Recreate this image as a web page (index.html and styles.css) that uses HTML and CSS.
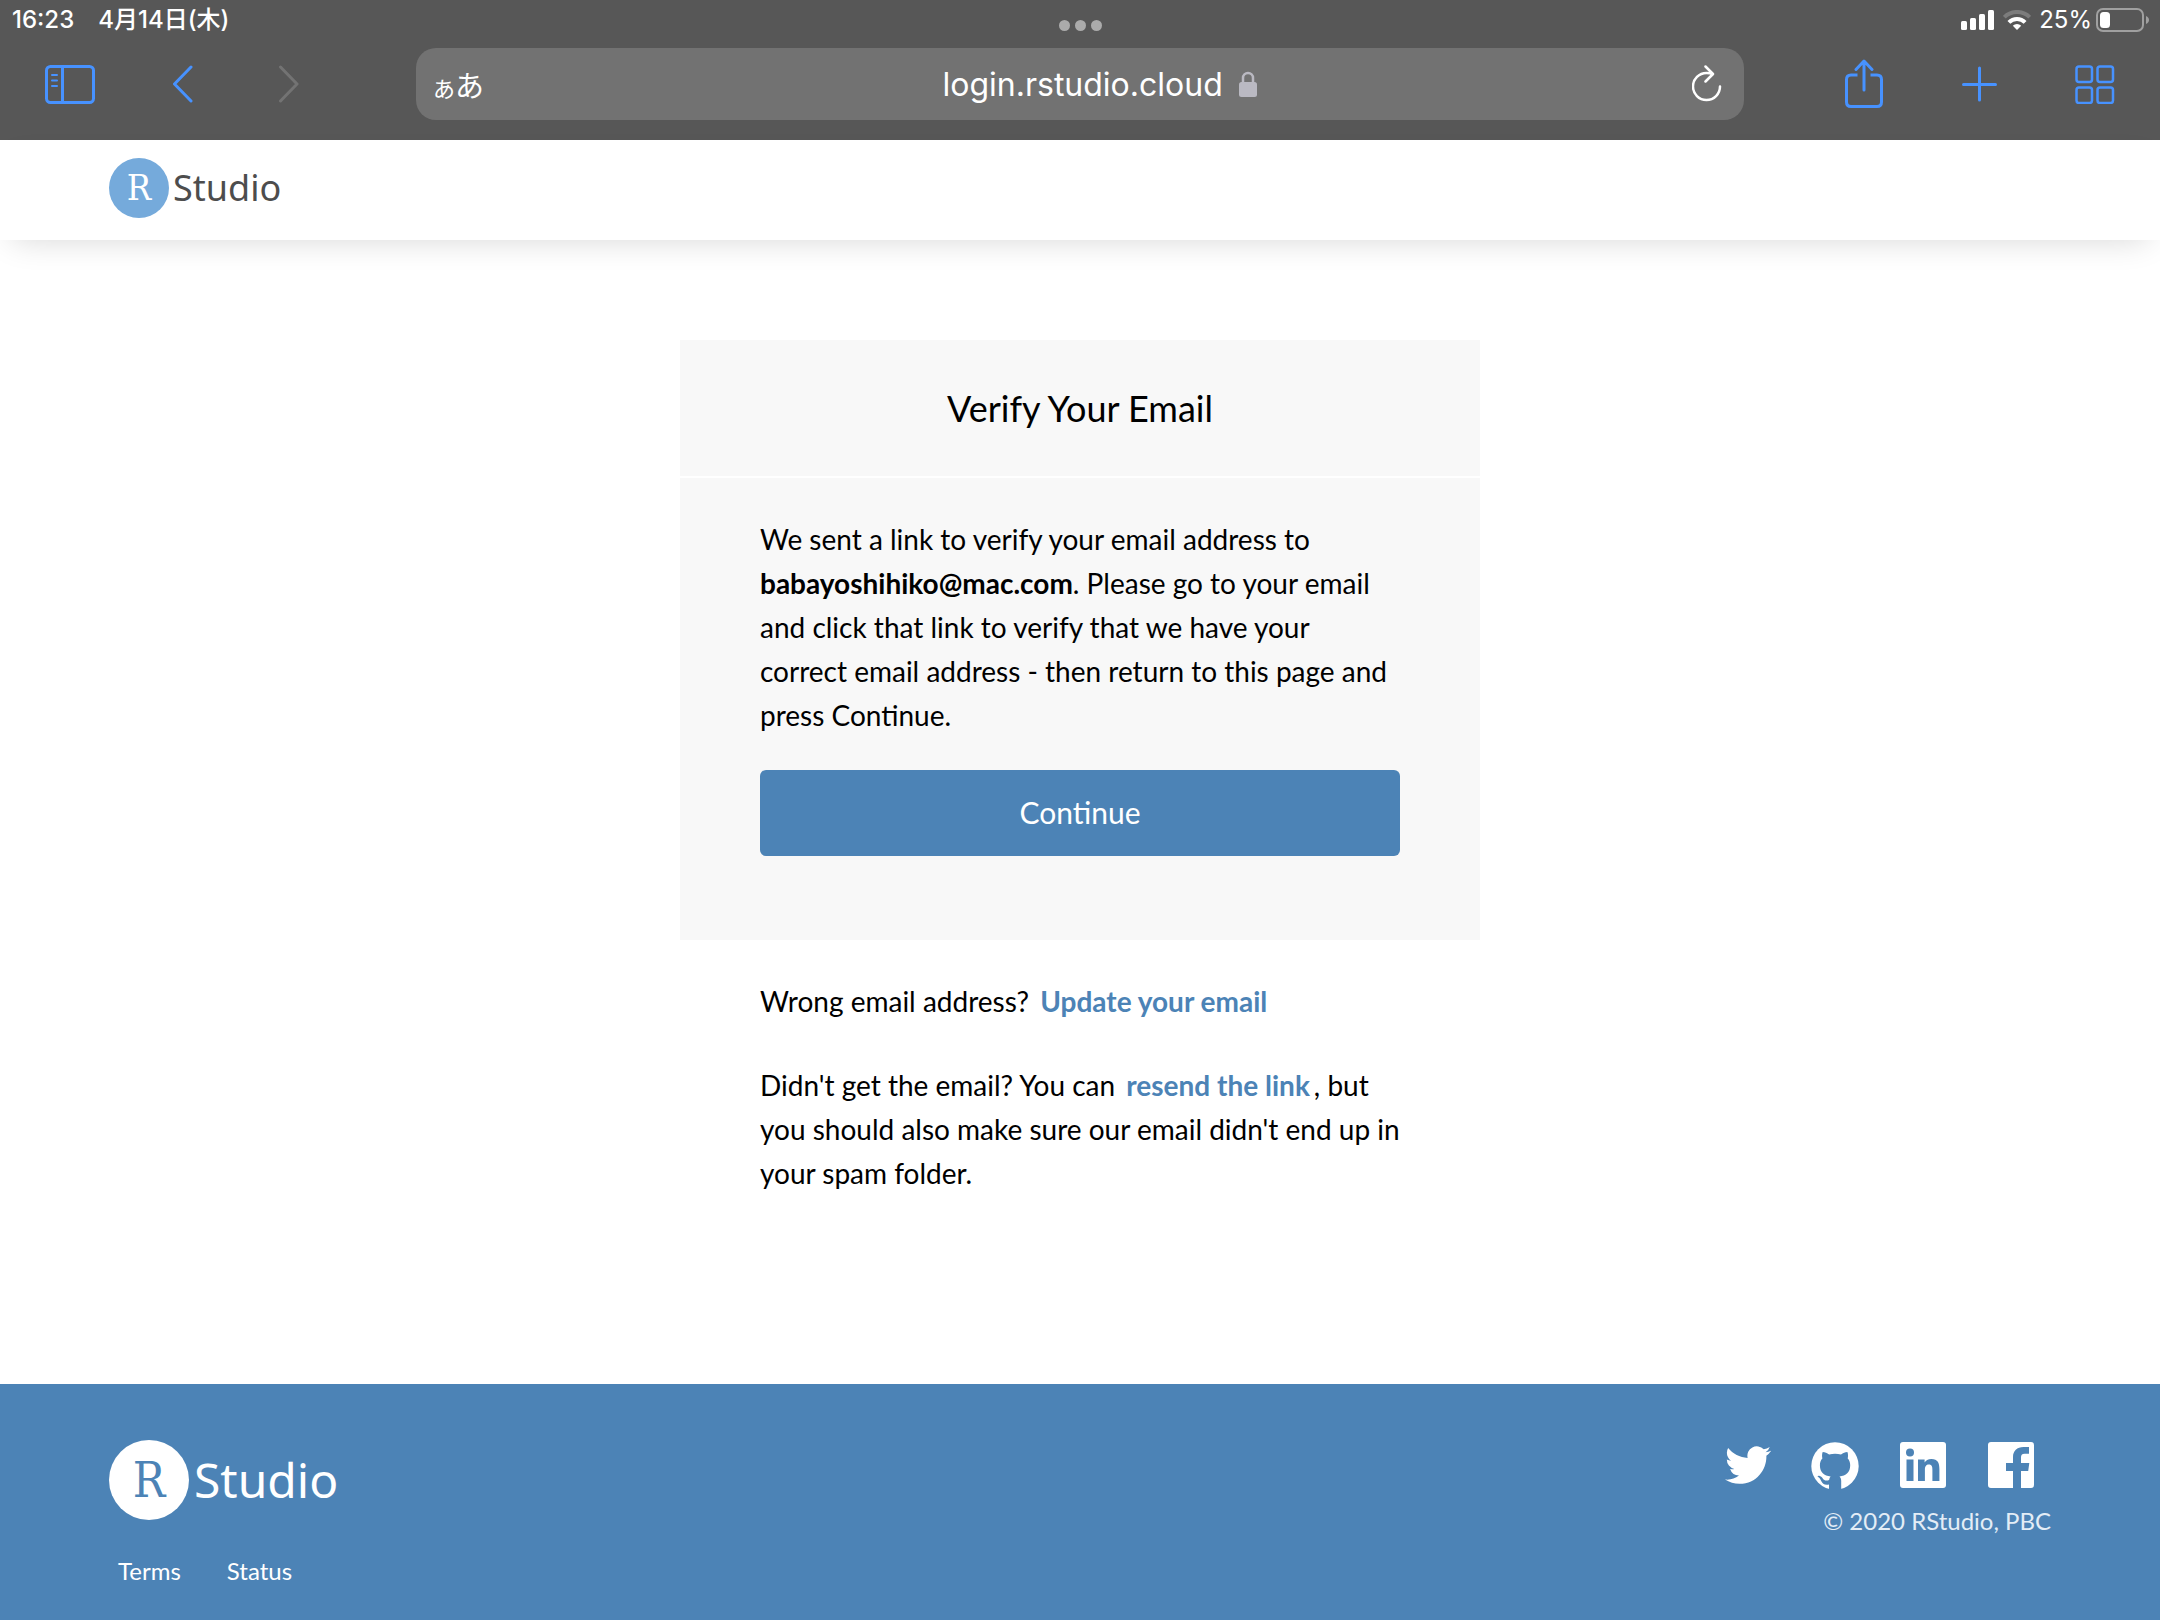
FILE: index.html
```html
<!DOCTYPE html>
<html lang="en">
<head>
<meta charset="utf-8">
<meta name="viewport" content="width=device-width, initial-scale=1">
<title>Verify Your Email - RStudio Cloud</title>
<link rel="stylesheet" href="styles.css">
</head>
<body>
<div class="browser">
  <div class="status">
    <div class="status-left"><span>16:23</span><span lang="ja">4月14日(木)</span></div>
    <div class="dots"><i></i><i></i><i></i></div>
    <div class="status-right">
      <svg class="signal" width="34" height="20" viewBox="0 0 34 20" fill="#fff" aria-hidden="true"><rect x="0" y="11" width="6" height="9" rx="1.5"/><rect x="9" y="8" width="6" height="12" rx="1.5"/><rect x="18" y="4" width="6" height="16" rx="1.5"/><rect x="27" y="0" width="6" height="20" rx="1.5"/></svg>
      <svg class="wifi" width="28" height="20" viewBox="0 0 28 20" fill="none" stroke="#fff" stroke-width="4" aria-hidden="true"><path d="M1.300 7.200a18 18 0 0 1 25.400 0" stroke="#7c7c7c"/><path d="M5.900 12.300a11.500 11.500 0 0 1 16.200 0"/><path d="M14 20l-4.200-4.200a6 6 0 0 1 8.400 0z" fill="#fff" stroke="none"/></svg>
      <div class="charge">
        <span>25%</span>
        <svg class="battery" width="54" height="24" viewBox="0 0 54 24" aria-hidden="true"><rect x="1" y="1" width="46" height="22" rx="6" fill="none" stroke="#a0a0a0" stroke-width="2"/><rect x="4" y="4" width="10" height="16" rx="3.500" fill="#fff"/><path d="M50 8c4 1.500 4 6.500 0 8z" fill="#a0a0a0"/></svg>
      </div>
    </div>
  </div>
  <div class="toolbar">
    <div class="tools">
      <button class="tool" type="button" aria-label="Show sidebar"><svg width="50" height="40" viewBox="0 0 50 40" fill="none" stroke="#4792ff" stroke-width="3"><rect x="1.500" y="2.500" width="47" height="36" rx="4"/><path d="M17.500 3v35"/><path d="M7 11h5M7 16.500h5M7 22h5" stroke-width="2" stroke-linecap="round"/></svg></button>
      <button class="tool" type="button" aria-label="Back"><svg width="24" height="40" viewBox="0 0 24 40" fill="none" stroke="#4792ff" stroke-width="3" stroke-linecap="round" stroke-linejoin="round"><path d="M18 3L1.500 20 18 37"/></svg></button>
      <button class="tool" type="button" aria-label="Forward"><svg width="24" height="40" viewBox="0 0 24 40" fill="none" stroke="#737373" stroke-width="3" stroke-linecap="round" stroke-linejoin="round"><path d="M5.500 3L22 20 5.500 37"/></svg></button>
    </div>
    <div class="address">
      <button class="tool reader" type="button" lang="ja" aria-label="Page settings"><span class="small-kana">あ</span>あ</button>
      <div class="url">
        <input type="text" value="login.rstudio.cloud" aria-label="Address">
        <svg width="18" height="26" viewBox="0 0 18 26" aria-hidden="true"><path d="M4 12V7a5 5 0 0 1 10 0v5" fill="none" stroke="#bab9c2" stroke-width="2.500"/><rect y="11" width="18" height="15" rx="2.500" fill="#bab9c2"/></svg>
      </div>
      <button class="tool reload" type="button" aria-label="Reload"><svg width="30" height="38" viewBox="0 0 30 38" fill="none" stroke="#fff" stroke-width="2.500" stroke-linecap="round" stroke-linejoin="round"><path d="M28 21.500A13.500 13.500 0 1 1 14.500 8q3.500 0 6.500 1M13.500 1.500L21 9l-7.500 7.500"/></svg></button>
    </div>
    <div class="tools tools-right">
      <button class="tool" type="button" aria-label="Share"><svg width="38" height="50" viewBox="0 0 38 50" fill="none" stroke="#4792ff" stroke-width="3"><path d="M12.500 16H6q-4.500 0-4.500 4.500V43q0 4.500 4.500 4.500h26q4.500 0 4.500-4.500V20.500q0-4.500-4.500-4.500H25.500"/><path d="M19 31V3M11 10.500l8-8.500 8 8.500" stroke-linecap="round" stroke-linejoin="round"/></svg></button>
      <button class="tool" type="button" aria-label="New tab"><svg width="36" height="36" viewBox="0 0 36 36" fill="none" stroke="#4792ff" stroke-width="3" stroke-linecap="round"><path d="M18.500 2v32M2.500 18.500h32"/></svg></button>
      <button class="tool" type="button" aria-label="Show tabs"><svg width="40" height="40" viewBox="0 0 40 40" fill="none" stroke="#4792ff" stroke-width="2.500"><rect x="1.500" y="2.500" width="15.500" height="15.500" rx="2.500"/><rect x="22.500" y="2.500" width="15.500" height="15.500" rx="2.500"/><rect x="1.500" y="23.500" width="15.500" height="15.500" rx="2.500"/><rect x="22.500" y="23.500" width="15.500" height="15.500" rx="2.500"/></svg></button>
    </div>
  </div>
</div>

<header class="site-header">
  <a class="logo" href="#"><span class="logo-ball">R</span><span>Studio</span></a>
</header>

<main class="main">
  <section class="card">
    <h1 class="card-title">Verify Your Email</h1>
    <form class="card-body">
      <p>We sent a link to verify your email address to <strong>babayoshihiko@mac.com</strong>. Please go to your email and click that link to verify that we have your correct email address - then return to this page and press Continue.</p>
      <button class="continue" type="button">Continue</button>
    </form>
  </section>
  <section class="help">
    <p>Wrong email address? <a href="#">Update your email</a></p>
    <p>Didn't get the email? You can <a href="#">resend the link</a>, but you should also make sure our email didn't end up in your spam folder.</p>
  </section>
</main>

<footer class="site-footer">
  <div class="footer-left">
    <a class="logo logo-large" href="#"><span class="logo-ball">R</span><span>Studio</span></a>
    <nav class="footer-links"><a href="#">Terms</a><a href="#">Status</a></nav>
  </div>
  <div class="footer-right">
    <div class="social">
      <a href="#" aria-label="Twitter"><svg width="48" height="48" viewBox="0 0 48 48" fill="#fff"><g transform="translate(2 0) scale(1.920)"><path d="M23.953 4.570a10 10 0 01-2.825.775 4.958 4.958 0 002.163-2.723c-.951.555-2.005.959-3.127 1.184a4.920 4.920 0 00-8.384 4.482C7.690 8.095 4.067 6.130 1.640 3.162a4.822 4.822 0 00-.666 2.475c0 1.710.870 3.213 2.188 4.096a4.904 4.904 0 01-2.228-.616v.060a4.923 4.923 0 003.946 4.827 4.996 4.996 0 01-2.212.085 4.936 4.936 0 004.604 3.417 9.867 9.867 0 01-6.102 2.105c-.390 0-.779-.023-1.170-.067a13.995 13.995 0 007.557 2.209c9.053 0 13.998-7.496 13.998-13.985 0-.210 0-.420-.015-.630A9.935 9.935 0 0024 4.590z"/></g></svg></a>
      <a href="#" aria-label="GitHub"><svg width="48" height="48" viewBox="0 0 48 48"><circle cx="24" cy="24" r="23.700" fill="#fff"/><path fill="#4c83b6" d="M18 48v-5.500c-4.500.8-6.500-.8-7.800-3.500-.8-1.800-1.700-3-3-3.900-1.200-.8-.4-1.700 1-1.400 1.600.3 2.700 1.500 3.600 2.800 1.500 2.300 3.500 2.500 6.300 1.500.200-1.600.700-2.800 1.500-3.600-6.500-.8-10.700-3.900-10.700-11.200 0-2.900.8-5 2.500-6.700-.5-2-.5-4.300.3-6.400 2.400 0 4.300 1 6.400 2.400 3.800-.9 8.100-.9 11.900 0 2.100-1.400 4-2.400 6.400-2.400.8 2.100.8 4.400.3 6.400 1.700 1.700 2.500 3.800 2.500 6.700 0 7.300-4.200 10.400-10.700 11.200 1.300 1.200 1.700 2.700 1.700 4.600V48z"/></svg></a>
      <a href="#" aria-label="LinkedIn"><svg width="48" height="48" viewBox="0 0 48 48"><rect x="1" width="46" height="46" rx="3" fill="#fff"/><g fill="#4c83b6"><circle cx="11" cy="10.500" r="4"/><path d="M7.500 17.500h7V39h-7zM19 17.500h6.600v3c1-2 3.500-3.600 6.800-3.600 6.500 0 8 4.200 8 10V39h-7V28c0-2.700-.200-5.400-3.600-5.400-3.200 0-3.900 2.600-3.900 5.200V39H19z"/></g></svg></a>
      <a href="#" aria-label="Facebook"><svg width="48" height="48" viewBox="0 0 48 48" fill="#fff"><path d="M4 0h40q3 0 3 3v40q0 3-3 3H34V29h7.200l1.100-8H34v-5.500c0-2.300.700-3.700 3.700-3.700H42V5h-5.500C30 5 26 9 26 15v6h-7v8h7v17H4q-3 0-3-3V3q0-3 3-3z"/></svg></a>
    </div>
    <small class="copyright">© 2020 RStudio, PBC</small>
  </div>
</footer>
</body>
</html>
```
FILE: styles.css
```css
* { box-sizing: border-box; }

body {
  margin: 0;
  min-height: 100vh;
  display: flex;
  flex-direction: column;
  background: #fff;
  color: #000;
  font-family: Lato, sans-serif;
  font-size: 28px;
  line-height: 44px;
}

a { color: inherit; text-decoration: none; }
p { margin: 0; }
svg { display: block; }

/* Browser bar */
.browser {
  height: 140px;
  background: #575757;
  color: #fff;
  font-family: Inter, "Noto Sans CJK JP", sans-serif;
}
.status {
  height: 48px;
  padding: 0 10px 8px 12px;
  display: grid;
  grid-template-columns: 1fr auto 1fr;
  align-items: center;
  font-size: 24px;
  line-height: 40px;
  font-weight: 500;
}
.status-left { display: flex; gap: 24px; }
.status-right {
  display: flex;
  align-items: center;
  justify-content: flex-end;
  gap: 8px;
  font-weight: 400;
}
.charge { display: flex; align-items: center; gap: 4px; }
.dots { display: flex; gap: 5px; padding: 10px 2px 0 0; }
.dots i { width: 11px; height: 11px; border-radius: 50%; background: #ababab; }

.toolbar {
  display: grid;
  grid-template-columns: 416px 1fr 416px;
  align-items: center;
}
.tools { display: flex; align-items: center; gap: 78px; padding: 0 45px; }
.tools-right { justify-content: flex-end; }
.tool {
  padding: 0;
  border: 0;
  background: none;
  color: inherit;
  font: inherit;
  cursor: pointer;
}
.address {
  height: 72px;
  padding: 0 22px 0 17px;
  display: grid;
  grid-template-columns: 1fr auto 1fr;
  align-items: center;
  border-radius: 20px;
  background: #727272;
}
.reader {
  padding-top: 3px;
  justify-self: start;
  font-family: "Noto Sans CJK JP", sans-serif;
  font-size: 29px;
}
.small-kana { font-size: 22px; }
.url { display: flex; align-items: center; gap: 16px; padding-left: 44px; }
.url input {
  width: 280px;
  field-sizing: content;
  padding: 1px 0 0;
  border: 0;
  background: none;
  color: #fff;
  font: 400 32px/40px Inter, sans-serif;
}
.reload { justify-self: end; }

/* Site header */
.site-header {
  height: 100px;
  padding: 18px 109px;
  background: #fff;
  box-shadow: 0 12px 32px -12px rgba(0, 0, 0, 0.16);
}
.logo {
  display: inline-flex;
  align-items: center;
  gap: 4px;
  color: #4d4d4d;
  font-family: "Noto Sans", sans-serif;
  font-size: 36px;
  line-height: 60px;
}
.logo-ball {
  width: 60px;
  border-radius: 50%;
  background: #75aadb;
  color: #fff;
  font-family: "DejaVu Serif Condensed", "DejaVu Serif", serif;
  text-align: center;
}
.logo-large { gap: 5px; color: #fff; font-size: 48px; line-height: 80px; }
.logo-large .logo-ball { width: 80px; background: #fff; color: #4c83b6; }

/* Content */
.main {
  flex: 1;
  width: 100%;
  max-width: 800px;
  margin: 0 auto;
  padding: 100px 0;
}
.card { background: #f8f8f8; }
.card-title {
  margin: 0;
  padding: 46px 80px;
  border-bottom: 2px solid #fff;
  font-size: 36px;
  line-height: 44px;
  font-weight: 400;
  text-align: center;
}
.card-body { padding: 39px 80px 84px; }
.continue {
  width: 100%;
  height: 86px;
  margin-top: 33px;
  padding: 0 0 2px;
  display: block;
  border: 0;
  border-radius: 6px;
  background: #4c83b6;
  color: #fff;
  font: 400 30px/44px Lato, sans-serif;
}
.help { padding: 39px 80px 0; display: grid; gap: 40px; }
.help a { margin: 0 4px; color: #4c83b6; font-weight: 700; }

/* Footer */
.site-footer {
  padding: 56px 109px 27px;
  display: flex;
  justify-content: space-between;
  background: #4c83b6;
  color: #fff;
  font-size: 24px;
}
.footer-links { display: flex; gap: 46px; padding: 29px 9px 0; }
.footer-right { display: flex; flex-direction: column; align-items: flex-end; gap: 9px; }
.social { display: flex; gap: 40px; padding: 2px 16px 0; }
.copyright { color: #e3edf6; font-size: 24px; line-height: 44px; }
```
